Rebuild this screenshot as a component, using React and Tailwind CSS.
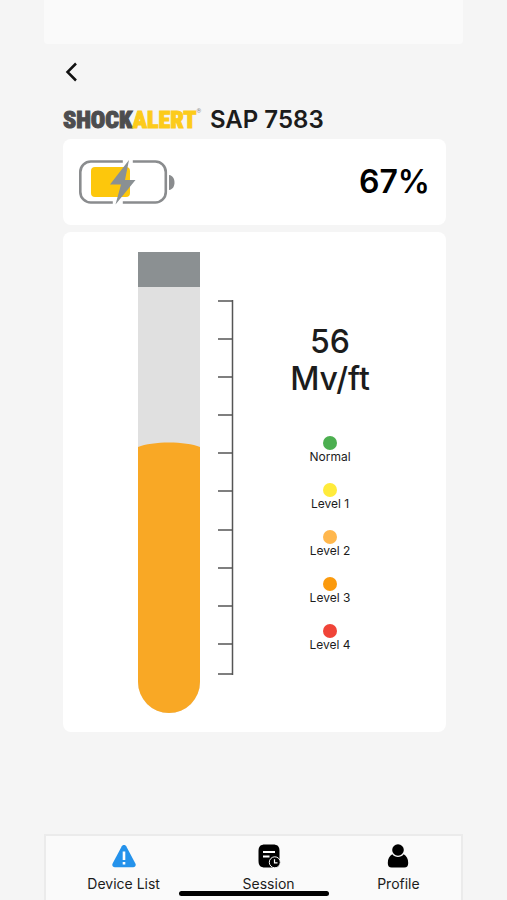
import React from "react";

const levels = [
  { name: "Normal", color: "bg-[#4caf50]" },
  { name: "Level 1", color: "bg-[#ffeb3b]" },
  { name: "Level 2", color: "bg-[#ffb74d]" },
  { name: "Level 3", color: "bg-[#fb9a0d]" },
  { name: "Level 4", color: "bg-[#f04438]" },
];

const ticks = [1, 39, 77, 115, 153, 191, 230, 268, 306, 344, 374];

const Battery = () => (
  <svg width="98" height="48" viewBox="0 0 98 48" fill="none" aria-hidden="true">
    <rect x="12" y="9" width="39" height="30" rx="4" fill="#fdc70c" />
    <path
      d="M43 3.500H11a10.500 10.500 0 0 0-10.500 10.500V34a10.500 10.500 0 0 0 10.500 10.500H33M53 3.500H75.500a10.500 10.500 0 0 1 10.500 10.500V34a10.500 10.500 0 0 1-10.500 10.500H43"
      transform="translate(.8 0)"
      stroke="#8a8c8e"
      strokeWidth="2.600"
    />
    <path d="M90 17c4 .5 5.500 4 5.500 7.500s-1.500 7-5.500 7.500z" fill="#8a8c8e" />
    <path d="M50 2L31 26.500H42L36.500 46.500L56.500 22H46z" fill="#8a9093" />
  </svg>
);

const Tube = () => (
  <svg width="62" height="462" viewBox="0 0 62 462" aria-hidden="true">
    <path d="M0 30H62V430a31 31 0 0 1-62 0z" fill="#e0e0e0" />
    <rect width="62" height="35" fill="#8b9092" />
    <path d="M0 195C14 189 48 189 62 195V430a31 31 0 0 1-62 0z" fill="#f9a825" />
  </svg>
);

const Scale = () => (
  <svg width="16" height="375" viewBox="0 0 16 375" stroke="#555" strokeWidth="1.5" aria-hidden="true">
    <path d="M14.500 0V375" />
    {ticks.map((y) => (
      <path key={y} d={`M0 ${y}H15`} />
    ))}
  </svg>
);

const WarningIcon = () => (
  <svg width="24" height="24" viewBox="0 0 24 24" aria-hidden="true">
    <path d="M9.800 2.200c1-1.700 3.400-1.700 4.400 0l9.200 17.300c.9 1.800-.2 3.800-2.200 3.800H2.800c-2 0-3.100-2-2.200-3.800z" fill="#2492eb" />
    <path d="M12 7.500V16M12 18V20.500" stroke="#fff" strokeWidth="2.600" />
  </svg>
);

const SessionIcon = () => (
  <svg width="24" height="24" viewBox="0 0 24 24" aria-hidden="true">
    <path d="M8 .5h8c4.500 0 6.500 2 6.500 6.500v8.500c0 6-2 8-7 8H8c-4.500 0-6.500-2-6.500-6.500V7C1.500 2.500 3.500.5 8 .5z" fill="#000" />
    <path d="M6 8H18M6 12.500H12.500" stroke="#fff" strokeWidth="2" />
    <circle cx="17.800" cy="18.300" r="5.500" fill="#000" stroke="#fafafa" strokeWidth="1" />
    <path d="M17.500 15.300V18.800H20.500" fill="none" stroke="#fff" strokeWidth="1.200" />
  </svg>
);

const ProfileIcon = () => (
  <svg width="24" height="24" viewBox="0 0 24 24" aria-hidden="true">
    <circle cx="12" cy="6" r="5.800" fill="#000" />
    <path d="M6.300 10.300C7.700 12.100 9.700 13 12 13s4.300-.9 5.700-2.700c2.900 1.400 4.500 4.700 4.500 8.700 0 3-1.200 4.500-3.900 4.500H5.700C3 23.500 1.800 22 1.800 19c0-4 1.600-7.300 4.500-8.700z" fill="#000" />
  </svg>
);

const tabs = [
  { name: "Device List", icon: <WarningIcon /> },
  { name: "Session", icon: <SessionIcon /> },
  { name: "Profile", icon: <ProfileIcon /> },
];

const App = () => {
  return (
    <div className="min-h-screen bg-[#f5f5f5] px-11 font-['Inter',sans-serif] text-[#1c1c1c]">
      <div className="flex flex-col min-h-screen">
        <div className="h-11 bg-[#fafafa] rounded-b-sm"></div>
        <main className="flex flex-col grow pl-[19px] pr-[17px]">
          <div className="flex items-center h-14">
            <button aria-label="Back" className="flex items-center w-6 h-8 cursor-pointer">
              <svg width="18" height="20" viewBox="0 0 18 20" fill="none" aria-hidden="true">
                <path d="M13 1.500L4.500 10L13 18.500" stroke="#111" strokeWidth="2.500" />
              </svg>
            </button>
          </div>
          <h1 className="flex items-center h-[39px] whitespace-nowrap">
            <span className="flex items-start w-[139px] font-['Roboto_Condensed','Open_Sans_Condensed','Noto_Sans_Condensed','Liberation_Sans',sans-serif] font-black text-2xl [-webkit-text-stroke:1px]">
              <span className="text-[#4d4d4f]">SHOCK</span>
              <span className="text-[#fccb1b]">ALERT</span>
              <span className="pt-1 text-[6px] leading-[6px] font-normal text-[#8a8c8e] [-webkit-text-stroke:0px]">®</span>
            </span>
            <span className="ml-2 text-2xl font-semibold">SAP 7583</span>
          </h1>
          <section className="flex items-center justify-between h-[86px] px-4 bg-white rounded-lg">
            <Battery />
            <span className="text-[32px] font-semibold text-black">67%</span>
          </section>
          <section className="flex mt-[7px] mb-4 h-[500px] pt-5 bg-white rounded-lg">
            <div className="flex gap-[18px] pl-[75px]">
              <Tube />
              <div className="pt-12">
                <Scale />
              </div>
            </div>
            <div className="flex flex-col items-center grow pt-[71px] pr-5">
              <p className="text-[32px] leading-[37px] font-medium text-center">
                56
                <br />
                Mv/ft
              </p>
              <ul className="flex flex-col gap-5 mt-[39px]">
                {levels.map((level) => (
                  <li key={level.name} className="flex flex-col items-center">
                    <span className={`w-3.5 h-3.5 rounded-full ${level.color}`}></span>
                    <span className="text-xs leading-[13px]">{level.name}</span>
                  </li>
                ))}
              </ul>
            </div>
          </section>
        </main>
        <nav className="relative flex justify-around h-[66px] pt-2 bg-[#fafafa] border-2 border-b-0 border-[#ebebeb]">
          {tabs.map((tab) => (
            <a key={tab.name} href="#" className="flex flex-col items-center gap-1.5 text-sm leading-5">
              {tab.icon}
              {tab.name}
            </a>
          ))}
          <div className="absolute bottom-1 left-1/2 -translate-x-1/2 w-[150px] h-[5px] rounded-full bg-black"></div>
        </nav>
      </div>
    </div>
  );
};

export default App;
